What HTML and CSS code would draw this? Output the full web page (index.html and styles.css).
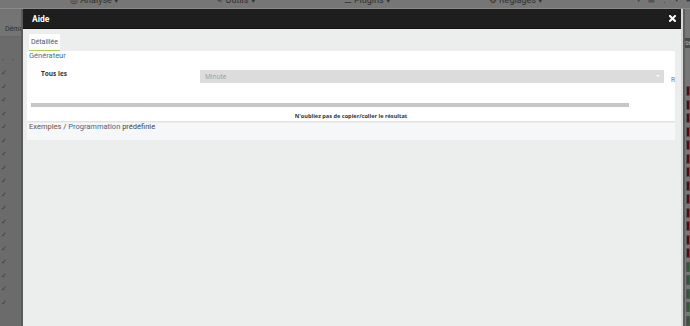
FILE: index.html
```html
<!DOCTYPE html>
<html lang="fr">

<head>
    <meta charset="UTF-8">
    <meta name="viewport" content="width=device-width, initial-scale=1.0">
    <title>Aide - Cron</title>
    <link rel="stylesheet" href="styles.css">
</head>

<body>
    <div class="page">
        <nav class="topnav">
            <span class="nav-item nav-analyse">&#9678; Analyse &#9662;</span>
            <span class="nav-item nav-outils">&#9998; Outils &#9662;</span>
            <span class="nav-item nav-plugins">&#9776; Plugins &#9662;</span>
            <span class="nav-item nav-reglages">&#9881; Réglages &#9662;</span>
            <span class="nav-badge"></span>
            <span class="nav-icons">&#9660; &#9636; &#8942; &#9660; &#9632;</span>
        </nav>
        <div class="main">
            <aside class="sidebar">
                <div class="crumb">
                    <svg width="4" height="6" viewBox="0 0 4 6">
                        <rect x="0" y="2.5" width="4" height="3.5" fill="#2a2a2a" />
                        <path d="M1 2.5 V1.5 A1 1 0 0 1 3 1.5 V2.5" stroke="#2a2a2a" fill="none" stroke-width="0.8" />
                    </svg>
                    <span>Démarrer</span>
                </div>
                <div class="dots"><span>.</span><span>.</span></div>
                <ul class="checks">
                    <li>&#10003;</li><li>&#10003;</li><li>&#10003;</li><li>&#10003;</li>
                    <li>&#10003;</li><li>&#10003;</li><li>&#10003;</li><li>&#10003;</li>
                    <li>&#10003;</li><li>&#10003;</li><li>&#10003;</li><li>&#10003;</li>
                    <li>&#10003;</li><li>&#10003;</li><li>&#10003;</li><li>&#10003;</li>
                    <li>&#10003;</li><li>&#10003;</li>
                </ul>
            </aside>
            <div class="content"></div>
            <aside class="status">
                <div class="status-head">Sta</div>
                <ul class="squares">
                    <li class="red"></li><li class="red"></li><li class="red"></li><li class="red"></li>
                    <li class="red"></li><li class="red"></li><li class="red"></li><li class="red"></li>
                    <li class="red"></li><li class="red"></li><li class="red"></li><li class="red"></li>
                    <li class="red"></li>
                    <li class="green"></li><li class="green"></li><li class="green"></li><li class="green"></li>
                    <li class="green"></li>
                </ul>
            </aside>
        </div>
    </div>

    <div class="modal">
        <div class="modal-header">
            <span class="modal-title">Aide</span>
            <svg class="close-button" width="7" height="7" viewBox="0 0 7 7">
                <path d="M1 1 L6 6 M6 1 L1 6" stroke="#fff" stroke-width="2" stroke-linecap="square" />
            </svg>
        </div>
        <div class="modal-body">
            <div class="tabs">
                <span class="tab active">Détaillée</span>
            </div>
            <div class="panel">
                <div class="legend">Générateur</div>
                <div class="form-row">
                    <label class="form-label">Tous les</label>
                    <div class="select">Minute<span class="caret"></span></div>
                    <span class="extra">R</span>
                </div>
                <div class="hscroll"></div>
                <div class="note">N'oubliez pas de copier/coller le résultat</div>
            </div>
            <div class="examples">
                <span class="ex-a">Exemples</span> / <span class="ex-b">Programmation</span> prédéfinie
            </div>
        </div>
    </div>
</body>

</html>
```

FILE: styles.css
```css
html,
body {
    margin: 0;
    padding: 0;
    height: 100%;
    overflow: hidden;
}

body {
    background-color: #737373;
    font-family: Roboto, "Liberation Sans", sans-serif;
}

/* background page, already darkened by the modal overlay */
.page {
    display: flex;
    flex-direction: column;
    height: 100%;
    overflow: hidden;
}

.topnav {
    height: 8px;
    flex-shrink: 0;
    border-bottom: 1px solid #8a8a8a;
    background-color: #767676;
    display: flex;
    overflow: hidden;
}

.nav-item,
.nav-icons {
    font-size: 9px;
    line-height: 9px;
    color: #303030;
    margin-top: -4px;
    white-space: nowrap;
}

.nav-analyse {
    margin-left: 70px;
}

.nav-outils {
    margin-left: 96px;
}

.nav-plugins {
    margin-left: 88px;
}

.nav-reglages {
    margin-left: 98px;
}

.nav-badge {
    width: 7px;
    height: 7px;
    background-color: #9a5a10;
    margin-left: 64px;
}

.nav-icons {
    margin-left: 28px;
    letter-spacing: 2px;
    color: #3a3a3a;
    font-size: 7px;
}

.main {
    flex: 1;
    min-height: 0;
    display: flex;
    overflow: hidden;
}

.sidebar {
    width: 21px;
    border-right: 2px solid #5b5b5b;
    background-color: #6b6b6b;
    overflow: hidden;
}

.crumb {
    height: 28px;
    padding: 14px 0 0 3px;
    box-sizing: border-box;
    display: flex;
    align-items: center;
    gap: 2px;
    font-size: 7px;
    line-height: 9px;
    color: #2e2e2e;
    white-space: nowrap;
    background-color: #747474;
    border-bottom: 1px solid #666;
}

.dots {
    display: flex;
    gap: 8px;
    padding: 17px 0 0 2px;
    font-size: 8px;
    line-height: 8px;
    color: #333;
}

.checks {
    list-style: none;
    margin: 5px 0 0;
    padding: 0 0 0 1px;
}

.checks li {
    font-size: 7px;
    line-height: 13.5px;
    color: #3a3a3a;
}

.content {
    flex: 1;
}

.status {
    width: 5px;
    border-left: 2px solid #5f5f5f;
    background-color: #777;
    overflow: hidden;
}

.status-head {
    margin-top: 29px;
    height: 10px;
    background-color: #4a4a4a;
    color: #bbb;
    font-size: 6px;
    line-height: 10px;
    white-space: nowrap;
}

.squares {
    list-style: none;
    margin: 38px 0 0;
    padding: 0;
    display: flex;
    flex-direction: column;
    gap: 3.5px;
}

.squares li {
    height: 8px;
    flex-shrink: 0;
    margin-left: 1px;
    border: 1px solid #555;
}

.squares .red {
    background-color: #5e0606;
}

.squares .green {
    background-color: #2b5a2b;
}

/* modal */
.modal {
    position: absolute;
    top: 9px;
    left: 23px;
    bottom: 0;
    width: 658px;
    border-right: 2px solid #d6d8d7;
    background-color: #eceeed;
    display: flex;
    flex-direction: column;
}

.modal-header {
    height: 19px;
    flex-shrink: 0;
    background-color: #1e1e1e;
    border-bottom: 1px solid #151515;
    display: flex;
    align-items: center;
    justify-content: space-between;
    padding: 0 5px 0 9px;
}

.modal-title {
    color: #fff;
    font-weight: bold;
    font-size: 8.5px;
}

.close-button {
    display: block;
}

.modal-body {
    padding: 5px 6px 0 4px;
}

.tabs {
    display: flex;
    padding-left: 2px;
}

.tab {
    font-size: 7px;
    line-height: 16px;
    padding: 0 2px;
    color: #555;
    background-color: #fff;
}

.tab.active {
    border-bottom: 1px solid #a8d548;
}

.panel {
    background-color: #fff;
    border-bottom: 1px solid #e2e4e3;
}

.legend {
    font-size: 7.5px;
    line-height: 10px;
    padding-left: 2px;
    color: #3d6f9e;
}

.form-row {
    display: flex;
    align-items: flex-start;
    margin-top: 9px;
    padding-left: 14px;
}

.form-label {
    width: 159px;
    margin-top: -1px;
    font-family: "Open Sans", "Liberation Sans", sans-serif;
    font-weight: bold;
    font-size: 6.5px;
    line-height: 10px;
    color: #333;
}

.select {
    width: 459px;
    height: 13px;
    padding-left: 5px;
    background-color: #dcdcdc;
    font-family: "Open Sans", "Liberation Sans", sans-serif;
    font-size: 6.5px;
    line-height: 13px;
    color: #9a9a9a;
    position: relative;
}

.caret {
    position: absolute;
    right: 4px;
    top: 5px;
    border-left: 2.5px solid transparent;
    border-right: 2.5px solid transparent;
    border-top: 2.5px solid #fafafa;
}

.extra {
    margin-left: 7px;
    margin-top: 6px;
    font-size: 6.5px;
    line-height: 8px;
    color: #6a7688;
}

.hscroll {
    width: 598px;
    height: 4px;
    margin: 19px 0 0 4px;
    background-color: #c6c6c6;
}

.note {
    margin-top: 5px;
    text-align: center;
    font-family: "Open Sans", "Liberation Sans", sans-serif;
    font-weight: bold;
    font-size: 5.6px;
    line-height: 9px;
    color: #333;
}

.examples {
    margin-top: 1px;
    height: 17px;
    padding-left: 2px;
    background-color: #f5f7f9;
    font-size: 7.5px;
    line-height: 8px;
    color: #444;
}

.ex-a {
    color: #6a5434;
}

.ex-b {
    color: #3b6a86;
}
```
